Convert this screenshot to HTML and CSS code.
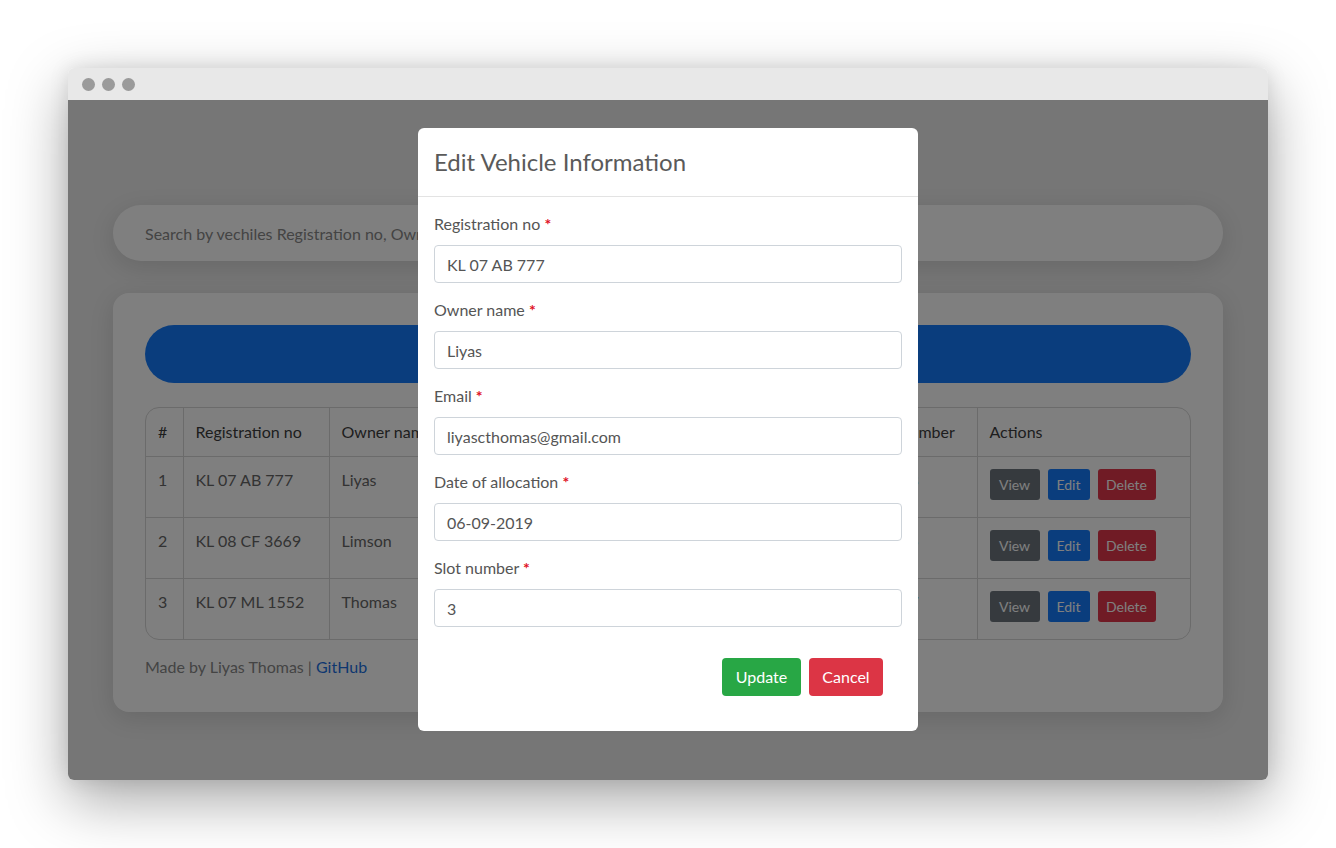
FILE: index.html
```html
<!DOCTYPE html>
<html>
<head>
<meta charset="utf-8">
<link rel="stylesheet" href="styles.css">
</head>
<body>
<div class="stage">
  <div class="window">
    <div class="titlebar">
      <span class="dot"></span><span class="dot"></span><span class="dot"></span>
    </div>
    <div class="viewport">
      <div class="page">
        <div class="search"><span class="search-text">Search by vechiles Registration no, Owner name, Email or Slot number</span></div>
        <div class="card">
          <div class="pill"></div>
          <div class="table-wrap">
            <table class="table">
              <thead>
                <tr><th class="c-num">#</th><th class="c-reg">Registration no</th><th class="c-own">Owner name</th><th class="c-mail"></th><th class="c-date"></th><th class="c-slot">Slot number</th><th class="c-act">Actions</th></tr>
              </thead>
              <tbody>
                <tr><td>1</td><td>KL 07 AB 777</td><td>Liyas</td><td></td><td></td><td class="slot">3</td><td class="acts"><span class="btn-sm b-gray">View</span><span class="btn-sm b-blue">Edit</span><span class="btn-sm b-red">Delete</span></td></tr>
                <tr><td>2</td><td>KL 08 CF 3669</td><td>Limson</td><td></td><td></td><td class="slot">5</td><td class="acts"><span class="btn-sm b-gray">View</span><span class="btn-sm b-blue">Edit</span><span class="btn-sm b-red">Delete</span></td></tr>
                <tr class="last"><td>3</td><td>KL 07 ML 1552</td><td>Thomas</td><td></td><td></td><td class="slot">7</td><td class="acts"><span class="btn-sm b-gray">View</span><span class="btn-sm b-blue">Edit</span><span class="btn-sm b-red">Delete</span></td></tr>
              </tbody>
            </table>
          </div>
          <div class="credit">Made by Liyas Thomas | <a class="link">GitHub</a></div>
        </div>
      </div>
      <div class="backdrop"></div>
      <div class="modal">
        <div class="modal-header">Edit Vehicle Information</div>
        <div class="modal-body">
          <div class="group"><div class="label">Registration no <span class="req">*</span></div><div class="input">KL 07 AB 777</div></div>
          <div class="group"><div class="label">Owner name <span class="req">*</span></div><div class="input">Liyas</div></div>
          <div class="group"><div class="label">Email <span class="req">*</span></div><div class="input">liyascthomas@gmail.com</div></div>
          <div class="group"><div class="label">Date of allocation <span class="req">*</span></div><div class="input">06-09-2019</div></div>
          <div class="group last"><div class="label">Slot number <span class="req">*</span></div><div class="input">3</div></div>
        </div>
        <div class="modal-footer">
          <span class="btn b-green">Update</span><span class="btn b-cancel">Cancel</span>
        </div>
      </div>
    </div>
  </div>
</div>
</body>
</html>
```
FILE: styles.css
```css
* { box-sizing: border-box; }
html, body { margin: 0; padding: 0; background: #fff; }
body { font-family: "Lato", "Open Sans", sans-serif; color: #555; }
.stage { padding: 68px; width: 1336px; height: 848px; }
.window {
  width: 1200px; height: 712px; border-radius: 6px; overflow: hidden;
  display: flex; flex-direction: column;
  box-shadow: 0 20px 60px rgba(0,0,0,0.35), 0 0 20px rgba(0,0,0,0.1);
}
.titlebar { height: 32px; background: #e8e8e8; display: flex; align-items: center; padding-left: 14px; gap: 7px; }
.dot { width: 13px; height: 13px; border-radius: 50%; background: #9a9a9a; }
.viewport { flex: 1; position: relative; background: #ececec; overflow: hidden; }
.page { padding: 105px 45px 0; display: flex; flex-direction: column; gap: 32px; }
.search {
  height: 56px; border-radius: 28px; background: #fff; padding-left: 32px;
  display: flex; align-items: center; font-size: 16px; color: #888;
  box-shadow: 0 6px 24px rgba(0,0,0,0.12);
}
.search-text { width: 273px; overflow: hidden; white-space: nowrap; }
.card {
  height: 419px; border-radius: 16px; background: #fff; padding: 32px;
  box-shadow: 0 6px 24px rgba(0,0,0,0.12);
}
.pill { height: 58px; border-radius: 29px; background: #157bfb; margin-bottom: 24px; }
.table-wrap { border: 1px solid #d6d6d6; border-radius: 14px; overflow: hidden; }
.table { width: 100%; border-collapse: collapse; font-size: 16px; table-layout: fixed; }
.table th, .table td { border-right: 1px solid #d6d6d6; border-bottom: 1px solid #d6d6d6; text-align: left; padding: 0 12px; white-space: nowrap; overflow: hidden; }
.table th:last-child, .table td:last-child { border-right: none; }
.table tr.last td { border-bottom: none; }
.table th { height: 48px; font-weight: 400; color: #3c3c3c; }
.table td { height: 61px; color: #666; vertical-align: top; padding-top: 13px; }
.c-num { width: 37px; }
.c-reg { width: 146px; }
.c-own { width: 150px; }
.c-mail { width: 220px; }
.c-date { width: 158px; }
.c-slot { width: 120px; }
.table td.slot { color: #1e9a3a; padding-left: 52px; }
.table td.acts { padding-top: 12px; }
.btn-sm { display: inline-flex; align-items: center; justify-content: center; height: 31px; border-radius: 3px; font-size: 14px; color: #fff; margin-right: 8px; }
.b-gray { background: #6c757d; width: 50px; }
.b-blue { background: #147bfb; width: 42px; }
.b-red { background: #e0374a; width: 58px; margin-right: 0; }
.credit { font-size: 16px; color: #888; margin-top: 17px; }
.link { color: #1c6fe0; }
.backdrop { position: absolute; inset: 0; background: rgba(0,0,0,0.5); }
.modal {
  position: absolute; left: 350px; top: 28px; width: 500px; height: 603px;
  background: #fff; border-radius: 6px; display: flex; flex-direction: column;
}
.modal-header { height: 69px; padding: 0 16px 2px; display: flex; align-items: center; font-size: 24px; color: #5a5a5a; border-bottom: 1px solid #e3e3e3; }
.modal-body { padding: 16px; }
.group { margin-bottom: 16px; }
.group.last { margin-bottom: 0; }
.label { font-size: 16px; line-height: 22px; margin-bottom: 10px; color: #555; }
.req { color: #e0101e; font-weight: 700; }
.input { height: 38px; border: 1px solid #ced4da; border-radius: 4px; padding-left: 12px; display: flex; align-items: center; font-size: 16px; color: #555; }
.modal-footer { padding: 15px 35px 0; display: flex; justify-content: flex-end; gap: 8px; }
.btn { height: 38px; display: inline-flex; align-items: center; justify-content: center; border-radius: 4px; color: #fff; font-size: 16px; padding-bottom: 2px; }
.b-green { background: #28a745; width: 79px; }
.b-cancel { background: #dc3545; width: 74px; }
```
